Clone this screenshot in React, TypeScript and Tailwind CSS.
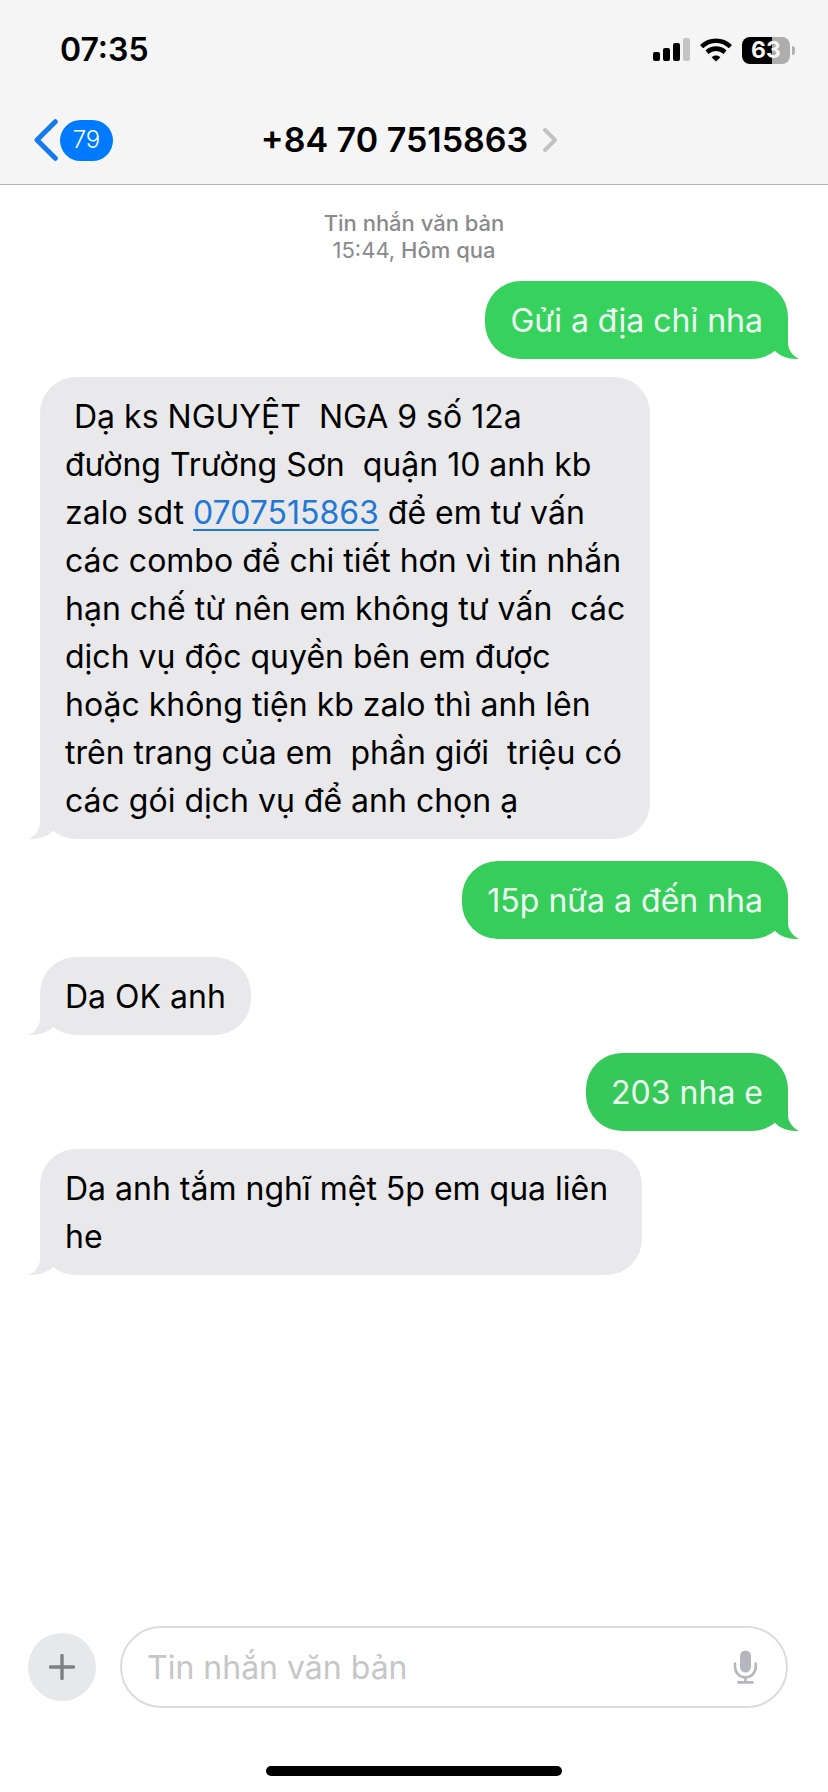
import React from 'react';
import clsx from 'clsx';

type Message = {
  from: 'me' | 'them';
  lines: React.ReactNode[];
  tone?: string;
  spaced?: boolean;
};

const messages: Message[] = [
  { from: 'me', lines: ['Gửi a địa chỉ nha'], tone: 'bg-[#37d25d] text-[#37d25d]' },
  {
    from: 'them',
    lines: [
      ' Dạ ks NGUYỆT  NGA 9 số 12a',
      'đường Trường Sơn  quận 10 anh kb',
      <>
        {'zalo sdt '}
        <a href="tel:0707515863" className="text-[#1f77d6] underline decoration-2 underline-offset-[5px]">
          0707515863
        </a>
        {' để em tư vấn'}
      </>,
      'các combo để chi tiết hơn vì tin nhắn',
      'hạn chế từ nên em không tư vấn  các',
      'dịch vụ độc quyền bên em được',
      'hoặc không tiện kb zalo thì anh lên',
      'trên trang của em  phần giới  triệu có',
      'các gói dịch vụ để anh chọn ạ',
    ],
  },
  { from: 'me', lines: ['15p nữa a đến nha'], tone: 'bg-[#37cd5b] text-[#37cd5b]', spaced: true },
  { from: 'them', lines: ['Da OK anh'] },
  { from: 'me', lines: ['203 nha e'], tone: 'bg-[#36c959] text-[#36c959]' },
  { from: 'them', lines: ['Da anh tắm nghĩ mệt 5p em qua liên\u00a0', 'he'] },
];

const Bubble = ({ from, lines, tone, spaced }: Message) => {
  const mine = from === 'me';

  return (
    <li
      className={clsx(
        'relative max-w-full rounded-[36px] px-[25px] pt-4 pb-[14px]',
        mine ? 'self-end' : 'self-start bg-[#e9e9eb] text-[#e9e9eb]',
        tone,
        spaced && 'mt-1'
      )}
    >
      {/* The tail takes the bubble colour through currentColor */}
      <svg
        viewBox="0 0 40 36"
        className={clsx('absolute bottom-0 h-9 w-10', mine ? '-right-3 -scale-x-100' : '-left-3')}
        fill="currentColor"
        aria-hidden="true"
      >
        <path d="M12 0V20C12 27 7 33 1 36C10 36.3 19 34 25 28L30 0Z" />
      </svg>
      <p
        className={clsx(
          'relative whitespace-pre-wrap text-[32px] leading-[48px]',
          mine ? 'text-[#ecfff2]' : 'text-black'
        )}
      >
        {lines.map((line, i) => (
          <span key={i} className="block">
            {line}
          </span>
        ))}
      </p>
    </li>
  );
};

const StatusBar = () => (
  <div className="flex items-center justify-between pt-[34px] pr-[33px] pl-[60px]">
    <time className="text-[32px] leading-8 font-semibold">07:35</time>
    <div className="flex items-center gap-[9px]">
      <svg viewBox="0 0 37 24" className="h-6 w-[37px]" aria-hidden="true">
        <rect x="0" y="14" width="7" height="9" rx="2" />
        <rect x="10" y="10" width="7" height="13" rx="2" />
        <rect x="20" y="5" width="7" height="18" rx="2" />
        <rect x="30" y="0" width="7" height="23" rx="2" fill="#c4c4c4" />
      </svg>
      <svg viewBox="0 0 34 24" className="h-6 w-[34px]" aria-hidden="true">
        <g fill="none" stroke="#000" strokeWidth="4.6">
          <path d="M2.6 8.6C10.8 .8 23.2 .8 31.4 8.6" />
          <path d="M8 14.2C13.2 9.4 20.8 9.4 26 14.2" />
        </g>
        <path d="M17 23.6L12.6 19.3C15.2 17 18.8 17 21.4 19.3Z" />
      </svg>
      <div className="flex items-center gap-[2px]">
        <div className="flex h-[27px] w-12 items-center justify-center rounded-lg bg-linear-to-r from-black from-63% to-[#adadad] to-63%">
          <span className="text-[23px] leading-6 font-bold text-[#f5f5f5]">63</span>
        </div>
        <div className="h-[9px] w-[3px] rounded-r-full bg-[#b0b0b0]" />
      </div>
    </div>
  </div>
);

const App = () => {
  return (
    <div className="flex min-h-screen flex-col bg-white font-['Inter','Noto_Sans',sans-serif] text-black">
      <header className="h-[185px] border-b border-[#b2b2b2] bg-[#f5f5f5]">
        <StatusBar />
        <div className="mt-[53px] grid grid-cols-[1fr_auto_1fr] items-center pr-[42px] pl-[33px]">
          <button type="button" className="flex items-center gap-[2px] justify-self-start" aria-label="Quay lại">
            <svg viewBox="0 0 25 42" className="h-[42px] w-[25px]" fill="none" aria-hidden="true">
              <path d="M22.3 2.7L4 21L22.3 39.3" stroke="#137af0" strokeWidth="5" strokeLinecap="round" strokeLinejoin="round" />
            </svg>
            <span className="flex h-[41px] w-[53px] items-center justify-center rounded-full bg-[#007aff] text-2xl font-light text-white">
              79
            </span>
          </button>
          <button type="button" className="flex items-center gap-[14px]">
            <h1 className="text-[34px] leading-10 font-semibold">+84 70 7515863</h1>
            <svg viewBox="0 0 16 26" className="h-[26px] w-4" fill="none" aria-hidden="true">
              <path d="M3 3L13 13L3 23" stroke="#c2c2c2" strokeWidth="4" strokeLinecap="round" strokeLinejoin="round" />
            </svg>
          </button>
          <span />
        </div>
      </header>

      <main className="flex-1 px-10">
        <div className="pt-[25px] pb-[17px] text-center text-[22px] leading-[27px] font-medium text-[#8a8a8c]">
          <p>Tin nhắn văn bản</p>
          <p>
            <span className="font-normal">15:44,</span> Hôm qua
          </p>
        </div>
        <ul className="flex flex-col gap-[18px]">
          {messages.map((message, i) => (
            <Bubble key={i} {...message} />
          ))}
        </ul>
      </main>

      <footer className="px-7">
        <form className="flex items-center gap-6 pr-3" onSubmit={(e) => e.preventDefault()}>
          <button
            type="button"
            className="flex size-[68px] shrink-0 items-center justify-center rounded-full bg-[#e6e8ea]"
            aria-label="Thêm"
          >
            <svg viewBox="0 0 26 26" className="size-[26px]" aria-hidden="true">
              <path d="M13 1.5V24.5M1.5 13H24.5" stroke="#7d8084" strokeWidth="3.4" strokeLinecap="round" />
            </svg>
          </button>
          <div className="flex h-[82px] flex-1 items-center rounded-full border-2 border-[#dcdcde] pr-[29px] pl-[25px]">
            <input
              type="text"
              aria-label="Tin nhắn văn bản"
              placeholder="Tin nhắn văn bản"
              className="h-12 min-w-0 flex-1 bg-transparent pt-[2px] text-[32px] placeholder:text-[#c6c6c8] focus:outline-none"
            />
            <button type="button" aria-label="Đọc chính tả">
              <svg viewBox="0 0 24 34" className="h-[34px] w-6" fill="none" aria-hidden="true">
                <rect x="7" y="0.5" width="11" height="22" rx="5.5" fill="#b6b7be" />
                <path d="M2 13.5V17A10.4 10.4 0 0 0 22.8 17V13.5M12.4 27.5V32M5.4 32.4H19.4" stroke="#b6b7be" strokeWidth="2.6" strokeLinecap="round" />
              </svg>
            </button>
          </div>
        </form>
        <div className="mx-auto mt-[58px] mb-4 h-[10px] w-[296px] rounded-full bg-black" />
      </footer>
    </div>
  );
};

export default App;
